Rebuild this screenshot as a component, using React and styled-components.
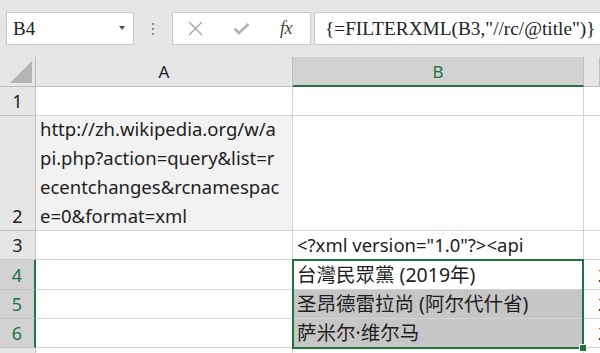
import React from "react";
import styled, { createGlobalStyle } from "styled-components";

const Global = createGlobalStyle`
  html, body { margin: 0; padding: 0; background: #e6e6e6; }
  #root { width: 600px; height: 353px; overflow: hidden; }
`;

const Page = styled.div`
  width: 600px;
  height: 353px;
  overflow: hidden;
  background: #e6e6e6;
  display: flex;
  flex-direction: column;
`;

const Toolbar = styled.div`
  height: 57px;
  box-sizing: border-box;
  padding: 12px 0 0 6px;
  display: flex;
  align-items: flex-start;
  flex-shrink: 0;
`;

const NameBox = styled.div`
  width: 128px;
  height: 33px;
  box-sizing: border-box;
  background: #fff;
  border: 1px solid #c8c8c8;
  display: flex;
  align-items: center;
  justify-content: space-between;
  padding: 0 8px 0 6px;
  font-family: "Liberation Serif", serif;
  font-size: 19px;
  color: #222;
`;

const Caret = styled.span`
  width: 0;
  height: 0;
  border-left: 3.5px solid transparent;
  border-right: 3.5px solid transparent;
  border-top: 4px solid #555;
  margin-top: -2px;
`;

const Dots = styled.div`
  width: 38px;
  height: 33px;
  display: flex;
  flex-direction: column;
  align-items: center;
  justify-content: center;
  gap: 3px;
`;

const Dot = styled.span`
  width: 2px;
  height: 2px;
  background: #8c8c8c;
`;

const FxBox = styled.div`
  width: 139px;
  height: 33px;
  box-sizing: border-box;
  background: #fff;
  border: 1px solid #c8c8c8;
  display: flex;
  align-items: center;
  padding-left: 15px;
`;

const IconSlot = styled.span`
  width: ${p => p.$w}px;
  display: flex;
  align-items: center;
`;

const FxLabel = styled.span`
  font-family: "Liberation Serif", serif;
  font-style: italic;
  font-size: 18px;
  color: #444;
  letter-spacing: -0.5px;
`;

const FormulaBox = styled.div`
  margin-left: 3px;
  flex: 1;
  height: 33px;
  box-sizing: border-box;
  background: #fff;
  border: 1px solid #c8c8c8;
  border-right: none;
  display: flex;
  align-items: center;
  padding-left: 10px;
  font-family: "Liberation Serif", serif;
  font-size: 19.3px;
  color: #222;
  white-space: nowrap;
  overflow: hidden;
`;

const Grid = styled.div`
  flex: 1;
  display: grid;
  grid-template-columns: 36px 257px 291px 1fr;
  grid-template-rows: 30px 29px 115px 29px 30px 29px 29px 1fr;
  background: #fff;
  font-family: "Noto Sans", "Noto Sans CJK TC", sans-serif;
`;

const Placed = styled.div`
  grid-row: ${p => p.$r};
  grid-column: ${p => p.$c};
  min-width: 0;
  min-height: 0;
`;

const Corner = styled(Placed)`
  background: #e6e6e6;
  border-right: 1px solid #bdbdbd;
  border-bottom: 1px solid #bdbdbd;
  display: flex;
  align-items: flex-end;
  justify-content: flex-end;
  padding: 0 3px 3px 0;
`;

const ColHead = styled(Placed)`
  background: ${p => (p.$active ? "#d2d2d2" : "#e6e6e6")};
  border-right: 1px solid #bdbdbd;
  border-bottom: ${p => (p.$active ? "2px solid #217346" : "1px solid #bdbdbd")};
  display: flex;
  align-items: center;
  justify-content: center;
  font-size: 17px;
  color: ${p => (p.$active ? "#217346" : "#222")};
`;

const RowHead = styled(Placed)`
  background: ${p => (p.$active ? "#d2d2d2" : "#e6e6e6")};
  border-right: ${p => (p.$active ? "2px solid #217346" : "1px solid #bdbdbd")};
  border-bottom: 1px solid #c4c4c4;
  display: flex;
  align-items: flex-end;
  justify-content: center;
  padding-bottom: 1px;
  box-sizing: border-box;
  font-size: 18px;
  line-height: 26px;
  color: ${p => (p.$active ? "#217346" : "#222")};
`;

const Cell = styled(Placed)`
  background: ${p => p.$bg || "#fff"};
  border-right: 1px solid #d4d4d4;
  border-bottom: 1px solid #d4d4d4;
  display: flex;
  flex-direction: column;
  justify-content: flex-end;
  padding: 0 0 0 4px;
  box-sizing: border-box;
  font-size: ${p => (p.$cjk ? "19.5px" : "18.5px")};
  line-height: 28px;
  color: #1e1e1e;
  white-space: nowrap;
  overflow: hidden;
`;

const EdgeCell = styled(Cell)`
  border-right: none;
  padding-left: 14px;
`;

const Line = styled.span`
  display: block;
  height: 29px;
  line-height: 29px;
`;

const Selection = styled(Placed)`
  margin: -1px 0 -1px -1px;
  border: 2px solid #217346;
  position: relative;
  pointer-events: none;
  z-index: 2;
`;

const Handle = styled.span`
  position: absolute;
  right: -5px;
  bottom: -5px;
  width: 6px;
  height: 6px;
  background: #217346;
  border: 1px solid #fff;
`;

const CloseIcon = () => (
  <svg width="15" height="15" viewBox="0 0 15 15">
    <path d="M1 1 L14 14 M14 1 L1 14" stroke="#a6a6a6" strokeWidth="1.4" fill="none" />
  </svg>
);

const CheckIcon = () => (
  <svg width="17" height="13" viewBox="0 0 17 13">
    <path d="M1.5 6.5 L6 11 L15.5 2" stroke="#b0b0b0" strokeWidth="2.6" fill="none" />
  </svg>
);

const Triangle = () => (
  <svg width="22" height="22" viewBox="0 0 22 22">
    <polygon points="0,22 22,22 22,0" fill="#b4b4b4" />
  </svg>
);

const rows = [
  { n: "1", a: null, b: null },
  {
    n: "2",
    a: [
      "http://zh.wikipedia.org/w/a",
      "pi.php?action=query&list=r",
      "ecentchanges&rcnamespac",
      "e=0&format=xml",
    ],
    aBg: "#f2f2f2",
    b: null,
  },
  { n: "3", a: null, b: '<?xml version="1.0"?><api' },
  { n: "4", a: null, b: "台灣民眾黨 (2019年)", active: true, cjk: true, c: "2" },
  { n: "5", a: null, b: "圣昂德雷拉尚 (阿尔代什省)", active: true, cjk: true, bBg: "#c6c6c6", c: "2" },
  { n: "6", a: null, b: "萨米尔·维尔马", active: true, cjk: true, bBg: "#c6c6c6", c: "2" },
  { n: "7", a: null, b: null },
];

export default function App() {
  return (
    <>
      <Global />
      <Page>
        <Toolbar>
          <NameBox>
            <span>B4</span>
            <Caret />
          </NameBox>
          <Dots>
            <Dot />
            <Dot />
            <Dot />
          </Dots>
          <FxBox>
            <IconSlot $w={45}>
              <CloseIcon />
            </IconSlot>
            <IconSlot $w={47}>
              <CheckIcon />
            </IconSlot>
            <IconSlot $w={24}>
              <FxLabel>fx</FxLabel>
            </IconSlot>
          </FxBox>
          <FormulaBox>{'{=FILTERXML(B3,"//rc/@title")}'}</FormulaBox>
        </Toolbar>
        <Grid>
          <Corner $r={1} $c={1}>
            <Triangle />
          </Corner>
          <ColHead $r={1} $c={2}>A</ColHead>
          <ColHead $r={1} $c={3} $active>B</ColHead>
          <ColHead $r={1} $c={4} />
          {rows.map((r, i) => (
            <React.Fragment key={r.n}>
              <RowHead $r={i + 2} $c={1} $active={r.active}>{r.n}</RowHead>
              <Cell $r={i + 2} $c={2} $bg={r.aBg}>
                {r.a && r.a.map(l => <Line key={l}>{l}</Line>)}
              </Cell>
              <Cell $r={i + 2} $c={3} $bg={r.bBg} $cjk={r.cjk}>
                {r.b}
              </Cell>
              <EdgeCell $r={i + 2} $c={4}>{r.c}</EdgeCell>
            </React.Fragment>
          ))}
          <Selection $r="5 / 8" $c={3}>
            <Handle />
          </Selection>
        </Grid>
      </Page>
    </>
  );
}
